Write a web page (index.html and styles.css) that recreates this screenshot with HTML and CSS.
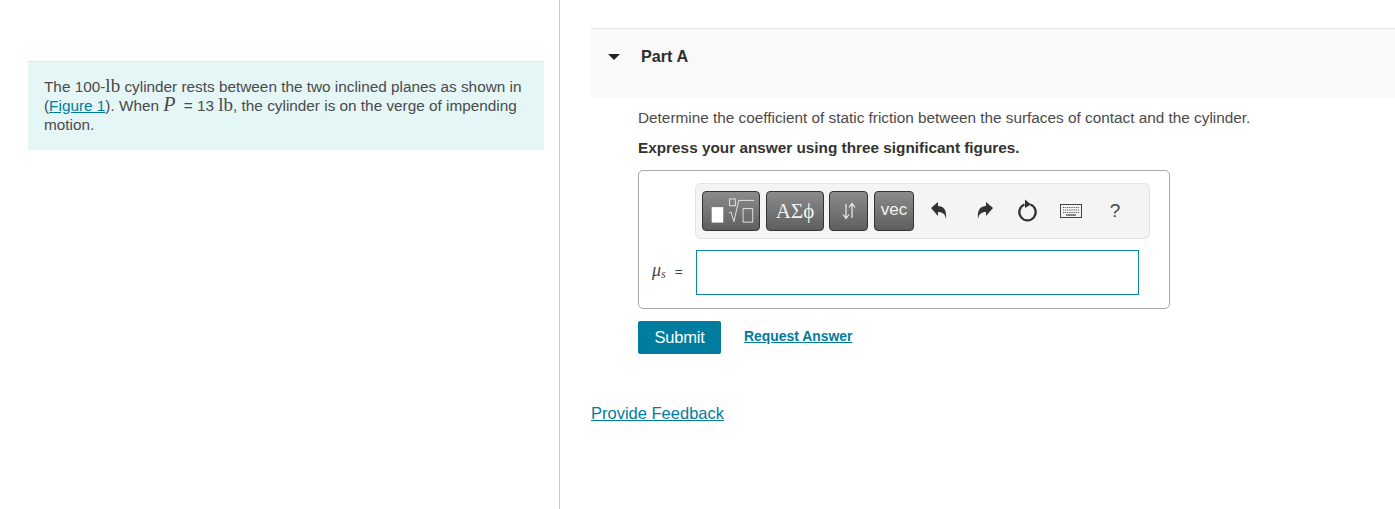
FILE: index.html
```html
<!DOCTYPE html>
<html lang="en">
<head>
    <meta charset="UTF-8">
    <title>Part A</title>
    <link rel="stylesheet" href="styles.css">
</head>
<body>
    <div class="page">
        <!-- Problem statement -->
        <div class="left-col">
            <div class="intro">
                The 100-<span class="math">lb</span> cylinder rests between the two inclined planes as shown in
                (<a href="#">Figure 1</a>). When <span class="math math-var">P</span> = 13 <span class="math">lb</span>, the cylinder is on the verge of impending
                motion.
            </div>
        </div>

        <div class="right-col">
            <div class="part-header">
                <span class="caret"></span>
                <span class="part-title">Part A</span>
            </div>

            <div class="part-body">
                <p class="question">Determine the coefficient of static friction between the surfaces of contact and the cylinder.</p>
                <p class="instruction">Express your answer using three significant figures.</p>

                <div class="answer-box">
                    <div class="toolbar">
                        <button class="tool tool-template">
                            <svg width="58" height="40" viewBox="0 0 58 40">
                                <rect x="9" y="16" width="12" height="16" fill="#fff"/>
                                <g fill="none" stroke="#e4e4e4" stroke-width="1">
                                    <rect x="27.5" y="7.5" width="6" height="7"/>
                                    <path d="M27 22l2 -1l3 10l5 -22h16"/>
                                    <rect x="41.5" y="17.5" width="10" height="14"/>
                                </g>
                            </svg>
                        </button>
                        <button class="tool tool-greek">ΑΣϕ</button>
                        <button class="tool tool-arrows">
                            <svg width="16" height="20" viewBox="0 0 16 20">
                                <g fill="none" stroke="#eee" stroke-width="1.2">
                                    <path d="M5 3v14M2 13.5l3 4l3 -4"/>
                                    <path d="M11 17v-14M8 6.5l3 -4l3 4"/>
                                </g>
                            </svg>
                        </button>
                        <button class="tool tool-vec">vec</button>

                        <button class="plain-tool undo">
                            <svg width="18" height="22" viewBox="0 0 18 22">
                                <path d="M1 8l7 -6v4c5 0 9 3 8 13c-1 -5 -3 -7 -8 -7v4z" fill="#333"/>
                            </svg>
                        </button>
                        <button class="plain-tool redo">
                            <svg width="18" height="22" viewBox="0 0 18 22">
                                <path d="M17 8l-7 -6v4c-5 0 -9 3 -8 13c1 -5 3 -7 8 -7v4z" fill="#333"/>
                            </svg>
                        </button>
                        <button class="plain-tool reset">
                            <svg width="22" height="24" viewBox="0 0 22 24">
                                <path d="M7.5 5.5a8.2 8.2 0 1 0 6 0" fill="none" stroke="#333" stroke-width="2.2"/>
                                <path d="M8 0.5l6 5l-6 3.5z" fill="#333"/>
                            </svg>
                        </button>
                        <button class="plain-tool keyboard">
                            <svg width="22" height="14" viewBox="0 0 22 14">
                                <rect x="0.5" y="0.5" width="21" height="13" fill="#f4f4f4" stroke="#444"/>
                                <path d="M3 3.5h16M3 6h16M3 8.5h16" stroke="#555" stroke-width="1.2" stroke-dasharray="1.2 0.9"/>
                                <path d="M6 11h10" stroke="#555" stroke-width="1.4"/>
                            </svg>
                        </button>
                        <button class="plain-tool help">?</button>
                    </div>

                    <div class="input-row">
                        <span class="input-label"><span class="mu">μ<sub>s</sub></span><span class="eq">=</span></span>
                        <input type="text" class="answer-input">
                    </div>
                </div>

                <div class="actions">
                    <button class="submit-btn">Submit</button>
                    <a href="#" class="request-link">Request Answer</a>
                </div>
            </div>

            <a href="#" class="feedback-link">Provide Feedback</a>
        </div>
    </div>
</body>
</html>
```

FILE: styles.css
```css
/* General styles */
html, body {
    height: 100%;
}

body {
    margin: 0;
    font-family: "Liberation Sans", Arial, sans-serif;
    color: #4a4a4a;
    background-color: #fff;
    overflow: hidden;
}

.page {
    display: flex;
    height: 509px;
}

a {
    color: #007c9e;
}

/* Left column */
.left-col {
    width: 560px;
    flex-shrink: 0;
    box-sizing: border-box;
    padding: 61px 15px 0 28px;
    border-right: 1px solid #c9ccd1;
}

.intro {
    background-color: #e5f6f7;
    border-top: 1px solid #dfe8e8;
    padding: 15px 16px;
    font-size: 15.33px;
    line-height: 19px;
    height: 89px;
    box-sizing: border-box;
}

.math {
    font-family: "Liberation Serif", serif;
    font-size: 19px;
    line-height: 0;
}

.math-var {
    font-style: italic;
    font-size: 20px;
    margin-right: 4px;
}

/* Right column */
.right-col {
    flex: 1;
    padding: 28px 0 0 31px;
}

.part-header {
    display: flex;
    align-items: flex-start;
    height: 69px;
    box-sizing: border-box;
    background-color: #f9f9f9;
    border-top: 1px solid #e3e3e3;
    padding-top: 18px;
    padding-left: 17px;
}

.caret {
    width: 0;
    height: 0;
    margin-top: 7px;
    border-left: 6px solid transparent;
    border-right: 6px solid transparent;
    border-top: 6px solid #222;
}

.part-title {
    margin-left: 21px;
    font-size: 16.2px;
    font-weight: bold;
    line-height: 19px;
    color: #2d2d2d;
}

.part-body {
    padding: 11px 0 0 47px;
}

.question {
    margin: 0;
    font-size: 15.33px;
    line-height: 19px;
}

.instruction {
    margin: 11px 0 0;
    font-size: 15.33px;
    font-weight: bold;
    line-height: 19px;
    color: #333;
}

/* Answer box */
.answer-box {
    width: 532px;
    height: 139px;
    box-sizing: border-box;
    margin-top: 13px;
    border: 1px solid #a9a9a9;
    border-radius: 5px;
    padding: 12px 19px 0 56px;
}

.toolbar {
    display: flex;
    align-items: center;
    height: 56px;
    box-sizing: border-box;
    background-color: #f4f4f4;
    border: 1px solid #e3e3e3;
    border-radius: 6px;
    padding-left: 6px;
}

.tool {
    height: 40px;
    padding: 0;
    display: flex;
    align-items: center;
    justify-content: center;
    margin-right: 6px;
    border: 1px solid #333;
    border-radius: 4px;
    background: linear-gradient(#8b8b8b, #5f5f5f);
    color: #f2f2f2;
}

.tool-template {
    width: 58px;
}

.tool-greek {
    width: 58px;
    margin-right: 5px;
    font-family: "Liberation Serif", serif;
    font-size: 21px;
}

.tool-arrows {
    width: 39px;
}

.tool-vec {
    width: 40px;
    font-family: "Liberation Sans", Arial, sans-serif;
    font-size: 17px;
    padding-bottom: 3px;
}

.plain-tool {
    display: flex;
    align-items: center;
    justify-content: center;
    width: 30px;
    height: 30px;
    padding: 0;
    border: none;
    background: none;
    color: #444;
}

.undo {
    margin-left: 4px;
}

.redo {
    margin-left: 16px;
}

.reset {
    margin-left: 13px;
}

.keyboard {
    margin-left: 13px;
}

.help {
    margin-left: 14px;
    font-family: "Liberation Sans", Arial, sans-serif;
    font-size: 19px;
}

.input-row {
    display: flex;
    align-items: center;
    margin-top: 11px;
    margin-left: -43px;
}

.input-label {
    width: 44px;
    margin-top: -4px;
    color: #444;
    white-space: nowrap;
}

.mu {
    font-family: "Liberation Serif", serif;
    font-style: italic;
    font-size: 18px;
}

.mu sub {
    font-size: 12px;
    line-height: 0;
    vertical-align: -2px;
}

.eq {
    margin-left: 9px;
    font-size: 13.5px;
}

.answer-input {
    width: 443px;
    height: 45px;
    box-sizing: border-box;
    border: 1px solid #0a87a9;
    padding: 0 8px;
    outline: none;
}

/* Actions */
.actions {
    display: flex;
    align-items: center;
    margin-top: 12px;
}

.submit-btn {
    width: 83px;
    height: 33px;
    padding: 0;
    background-color: #007c9e;
    color: #fff;
    border: none;
    border-radius: 2px;
    font-family: "Liberation Sans", Arial, sans-serif;
    font-size: 16.5px;
    letter-spacing: -0.2px;
}

.request-link {
    margin-left: 23px;
    font-size: 13.9px;
    font-weight: bold;
    margin-top: -4px;
}

.feedback-link {
    display: block;
    width: max-content;
    margin-top: 50px;
    font-size: 16.5px;
    line-height: 19px;
}
```
